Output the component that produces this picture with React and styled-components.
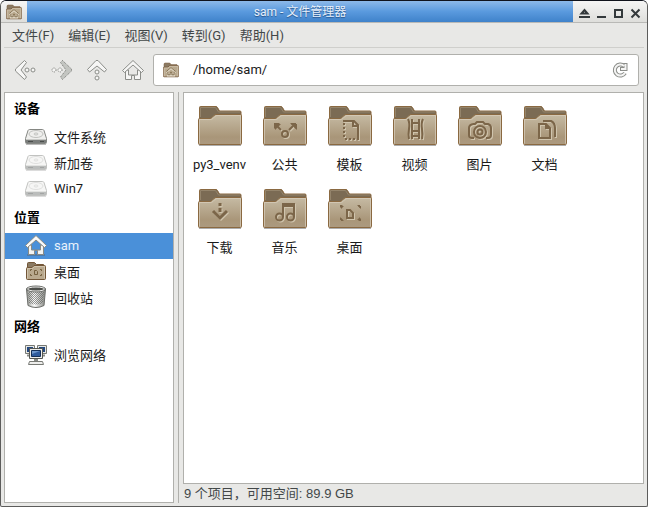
import React from 'react';
import styled, { createGlobalStyle, css } from 'styled-components';

const colors = {
  base: '#e8e8e6',
  border: '#b0b0ac',
  divider: '#cfcfcc',
  frame: '#5c5c5b',
  select: '#4a90d9',
  text: '#1a1a1a',
  chrome: '#424748',
  folderEdge: '#8a6941',
  glyph: '#7c6649',
};

const GlobalStyle = createGlobalStyle`
  * {
    box-sizing: border-box;
  }
  body {
    background: #fff;
    margin: 0;
  }
  body,
  button,
  input {
    font-family: Roboto, "Noto Sans CJK SC", sans-serif;
    font-size: 13px;
  }
`;

const Window = styled.div`
  background: ${colors.base};
  border: 1px solid ${colors.frame};
  border-top: 1px solid #10131c;
  border-radius: 6px 6px 2px 2px;
  display: flex;
  flex-direction: column;
  height: 100vh;
  min-height: 400px;
  overflow: hidden;
`;
const TitleBar = styled.header`
  border-bottom: 1px solid #b9b9b6;
  display: flex;
  height: 22px;
  flex: none;
`;
const WindowIcon = styled.div`
  align-items: center;
  background: linear-gradient(#f5f5f4, #dededb);
  display: flex;
  justify-content: center;
  width: 26px;
`;
const Title = styled.h1`
  background: linear-gradient(#8db9e9, #5a9ade 50%, #3f82ca);
  color: #e6effa;
  flex: 1;
  font-size: 12px;
  font-weight: normal;
  line-height: 22px;
  margin: 0;
  text-align: center;
  text-shadow: 0 1px 1px #28558a;
`;
const WindowButtons = styled.div`
  background: linear-gradient(#f5f5f4, #dededb);
  display: flex;
  padding: 2px 3px 0;
`;
const PlainButton = styled.button`
  align-items: center;
  background: none;
  border: 0;
  display: flex;
  justify-content: center;
  padding: 0;
`;
const WindowButton = styled(PlainButton)`
  width: 17px;
`;

const MenuBar = styled.nav`
  border-bottom: 1px solid ${colors.divider};
  display: flex;
  flex: none;
  gap: 14px;
  height: 25px;
  margin: 0 3px;
  padding: 0 8px 2px;
`;
const MenuItem = styled(PlainButton)`
  color: ${colors.chrome};
`;

const Toolbar = styled.div`
  align-items: center;
  display: flex;
  flex: none;
  height: 44px;
  padding: 0 8px 0 6px;
`;
const ToolButton = styled(PlainButton)`
  height: 36px;
  width: 36px;
`;
const PathBar = styled.div`
  align-items: center;
  background: #fff;
  border: 1px solid ${colors.border};
  border-radius: 3px;
  display: flex;
  flex: 1;
  height: 32px;
  margin-left: 2px;
  padding: 0 9px;
`;
const PathInput = styled.input`
  background: none;
  border: 0;
  color: ${colors.text};
  flex: 1;
  min-width: 0;
  outline: 0;
  padding: 0 14px 2px;
`;

const Body = styled.div`
  display: flex;
  flex: 1;
  min-height: 0;
  padding: 0 3px 3px;
`;
const Sidebar = styled.aside`
  background: #fff;
  border: 1px solid ${colors.border};
  flex: none;
  overflow: hidden;
  width: 170px;
`;
const Heading = styled.h2`
  color: #000;
  font-size: 13px;
  line-height: 31px;
  margin: 0;
  padding-left: 9px;
`;
const PlaceList = styled.ul`
  list-style: none;
  margin: 0;
  padding: 0;
`;
const Place = styled(PlainButton)`
  color: ${colors.text};
  gap: 6px;
  height: 26px;
  justify-content: flex-start;
  padding: 0 0 2px 19px;
  width: 100%;
  ${props => props.$selected && css`
    background: ${colors.select};
    color: #e9f2fb;
  `}
`;
const Handle = styled.div`
  border-left: 1px solid ${colors.border};
  flex: none;
  margin-left: 4px;
  width: 5px;
`;
const Content = styled.section`
  display: flex;
  flex: 1;
  flex-direction: column;
  min-width: 0;
`;
const IconView = styled.main`
  align-content: start;
  background: #fff;
  border: 1px solid ${colors.border};
  display: grid;
  flex: 1;
  grid-auto-rows: 83px;
  grid-template-columns: repeat(auto-fill, 65px);
  padding: 8px 60px 8px 3px;
`;
const Item = styled(PlainButton)`
  color: ${colors.text};
  flex-direction: column;
  gap: 6px;
  justify-content: flex-start;
`;
const Label = styled.span`
  line-height: 20px;
`;
const StatusBar = styled.footer`
  color: ${colors.chrome};
  font-family: "Liberation Sans", "Noto Sans CJK SC", sans-serif;
  height: 19px;
  line-height: 19px;
  padding-left: 1px;
`;

const glyphs = {
  none: null,
  share: (
    <>
      <circle cx="24" cy="33" r="3" />
      <path d="M20 29l-4-4M28 29l4-4" />
      <path d="M13 22h6l-6 6zM35 22h-6l6 6z" fill={colors.glyph} stroke="none" />
    </>
  ),
  template: (
    <>
      <path d="M17 20h11l4 4v13M27 20v5h5" />
      <path d="M18 22v15M19 38h14" strokeDasharray="2 2" />
    </>
  ),
  video: (
    <>
      <path d="M17 18q2 4 1 10t0 10M32 18q-2 4-1 10t0 10" />
      <path d="M21 18v20M28 18v20" />
      <path d="M21 22h7M21 30h7M21 35h7" />
    </>
  ),
  camera: (
    <>
      <path d="M17 23h2l2-2h6l2 2h3q3 1 3 4v7q0 3-3 3h-2M18 37h-2q-3 0-3-3v-7q0-3 4-4" />
      <circle cx="24" cy="31" r="6" />
      <circle cx="24" cy="31" r="2.5" />
    </>
  ),
  documents: (
    <>
      <path d="M18 23h7l4 4v10H18zM25 23v4h4M22 20h8q4 2 4 7v9" />
    </>
  ),
  download: (
    <>
      <path d="M17 27l7 7 7-7" strokeWidth="3" />
      <path d="M24 19v3M24 24v4" strokeWidth="3" />
    </>
  ),
  music: (
    <>
      <circle cx="18.5" cy="33" r="3.5" />
      <circle cx="29.5" cy="33" r="3.5" />
      <path d="M22 33V20h11v13M22 22h11" />
    </>
  ),
  desktop: (
    <>
      <path d="M21 26h3l3 3v5h-6z" strokeWidth="2" />
      <path d="M14 21h3l-3 3zM34 21h-3l3 3zM14 36h3l-3-3zM34 36h-3l3-3z" fill={colors.glyph} stroke="none" />
    </>
  ),
};

function FolderIcon({ glyph = 'none', size = 48 }) {
  const id = `folder-${glyph}`;
  return (
    <svg width={size} height={size} viewBox="0 0 48 48" fill="none" aria-hidden="true">
      <defs>
        <linearGradient id={id} x2="0" y2="1">
          <stop stopColor="#c6bba4" />
          <stop offset=".75" stopColor="#a99679" />
          <stop offset="1" stopColor="#ac9a80" />
        </linearGradient>
      </defs>
      <path d="M3 44.5h42" stroke="#333" strokeOpacity=".4" />
      <path d="M3.500 42V6.500q0-1 1-1H20q1 0 1.500 1l2 3.500H44q1 0 1 1v31z" fill="#7b6b54" stroke={colors.folderEdge} />
      <path d="M4.500 16V6.500h15l3 4.500H44" stroke="#94846b" />
      <path d="M2.500 18.500q0-1 1-1H14q1 0 2-1l2-2q1-1 2-1h24.500q1 0 1 1v28q0 1-1 1h-41q-1 0-1-1z" fill={`url(#${id})`} stroke={colors.folderEdge} />
      <path d="M3.500 42.500v-24H14q2 0 3-1l2-2q1-1 2-1h23.500v28" stroke="#d8cfbd" strokeOpacity=".7" />
      <g transform="translate(1 1)" stroke="#d0c5ae" strokeWidth="2">{glyphs[glyph]}</g>
      <g stroke={colors.glyph} strokeWidth="2">{glyphs[glyph]}</g>
    </svg>
  );
}

// inset leaves the 20px drawing at its own size inside a larger icon slot
function SmallFolderIcon({ glyph, size, inset = 0 }) {
  const box = 20 + inset * 2;
  return (
    <svg width={size} height={size} viewBox={`${-inset} ${-inset} ${box} ${box}`} fill="none" aria-hidden="true">
      <path d="M1.500 16V2.500q0-1 1-1h6l2 2h7V16z" fill="#8a7a63" stroke="#735637" />
      <path d="M.5 7.500q0-1 1-1H6l2-2h10.500q1 0 1 1v12q0 1-1 1h-17q-1 0-1-1z" fill="#b9a98e" stroke="#735637" />
      <path d="M1.500 17.500v-10h5l2-2h10v12" stroke="#d0c4ae" />
      {glyph === 'home' ? (
        <>
          <path d="M4 13l6-5 6 5M6 13v4h3v-3h2v3h3v-4" stroke="#e3dac8" strokeWidth="2" />
          <path d="M4 12l6-5 6 5M6 12v4h3v-3h2v3h3v-4" stroke="#75603f" />
        </>
      ) : (
        <>
          <path d="M8.500 9.500h2l1 1v3h-3z" stroke="#75603f" />
          <path d="M4.500 10V8.500H6M14 8.500h1.500V10M4.500 13v1.500H6M14 14.500h1.500V13" stroke="#75603f" />
        </>
      )}
    </svg>
  );
}

function DriveIcon({ faded }) {
  return (
    <svg width="24" height="24" viewBox="0 0 24 24" fill="none" opacity={faded ? 0.5 : 1} aria-hidden="true">
      <path d="M2 20.500h20" stroke="#777" strokeOpacity=".5" />
      <path d="M5.500 5.500h13q1 0 1.500 1l2.500 8v4q0 1-1 1h-19q-1 0-1-1v-4l2.500-8q.5-1 1.500-1z" fill="#efefed" stroke="#858783" />
      <path d="M2 15h20v4H2z" fill="#7a7d7b" />
      <path d="M2 15.500h20" stroke="#c9cac7" />
      <ellipse cx="12" cy="10" rx="7" ry="3.500" stroke="#c0c1be" />
      <ellipse cx="12" cy="10" rx="2" ry="1" stroke="#c0c1be" />
      <path d="M4 17.500h5M16 17.500h4" stroke="#4a4d4b" />
    </svg>
  );
}

function HomeIcon() {
  return (
    <svg width="24" height="24" viewBox="0 0 24 24" fill="none" strokeLinejoin="round" aria-hidden="true">
      <path d="M3 22h18" stroke="#555" strokeOpacity=".35" strokeWidth="2" />
      <path d="M4.500 12v9.500h6v-4h3v4h6V12h-3v5h-9v-5z" fill="#f4f4f2" stroke="#888a85" />
      <path d="M12 2.500L1.500 12.500l2 2L12 7l8.500 7.500 2-2z" fill="#fafaf9" stroke="#888a85" />
    </svg>
  );
}

function TrashIcon() {
  return (
    <svg width="24" height="24" viewBox="0 0 24 24" fill="none" aria-hidden="true">
      <defs>
        <pattern id="mesh" width="2" height="2" patternUnits="userSpaceOnUse">
          <path d="M0 0h1v1H0zM1 1h1v1H1z" fill="#555753" fillOpacity=".6" />
        </pattern>
        <linearGradient id="can">
          <stop stopColor="#8f918c" />
          <stop offset=".4" stopColor="#fff" />
          <stop offset="1" stopColor="#858782" />
        </linearGradient>
      </defs>
      <path d="M2.500 4L4 20.500q8 4 16 0L21.500 4z" fill="url(#can)" stroke="#6b6d69" />
      <path d="M4 7l1 11q7 3 14 0l1-11z" fill="url(#mesh)" />
      <ellipse cx="12" cy="4" rx="9.500" ry="3" fill="#4d4f4b" stroke="#6b6d69" />
      <ellipse cx="12" cy="4" rx="8.500" ry="2" stroke="#eeeeec" />
    </svg>
  );
}

function NetworkIcon() {
  return (
    <svg width="24" height="24" viewBox="0 0 24 24" fill="none" aria-hidden="true">
      <path d="M1.500 3.500h9v8h-9zM13.500 3.500h9v8h-9z" fill="#e6e7e4" stroke="#777974" />
      <path d="M3 5h6v5H3zM15 5h6v5h-6z" fill="#23477e" />
      <path d="M3 13.500h4M17 13.500h4" stroke="#888a85" strokeWidth="2" />
      <path d="M5.500 6.500h13v10h-13z" fill="#eeeeec" stroke="#555753" />
      <path d="M7.500 8.500h9v6h-9z" fill="#2f5b9d" stroke="#142f57" />
      <path d="M8 12l8-3H8z" fill="#6f98cd" />
      <path d="M12 17v2" stroke="#888a85" strokeWidth="4" />
      <path d="M5.500 19.500h13l1 3h-15z" fill="#eeeeec" stroke="#777974" />
    </svg>
  );
}

function ToolIcon({ name }) {
  return (
    <svg width="24" height="24" viewBox="0 0 24 24" fill="#f6f6f5" stroke="#8b8d89" strokeLinejoin="round" aria-hidden="true">
      {name === 'back' && (
        <>
          <path d="M11.500 2.500l2 2L8 12l5.500 7-2 2.500L2.500 13v-2z" />
          <circle cx="14" cy="12" r="2" />
          <circle cx="20" cy="12" r="2" />
        </>
      )}
      {name === 'forward' && (
        <>
          <path d="M13.500 2.500l-2 2L17 12l-5.500 7 2 2.500 9-8.500v-2z" fill="#c3c5c1" stroke="#747672" strokeDasharray="1 1" />
          <circle cx="11" cy="12" r="2" stroke="#747672" strokeDasharray="1 1" />
          <circle cx="5" cy="12" r="2" stroke="#747672" strokeDasharray="1 1" />
        </>
      )}
      {name === 'up' && (
        <>
          <path d="M2.500 11.500l2 2.500L12 8l7.500 6 2-2.500L13 2.500h-2z" />
          <circle cx="12" cy="14" r="2" />
          <circle cx="12" cy="20" r="2" />
        </>
      )}
      {name === 'home' && (
        <>
          <path d="M4.500 12v9.500h6v-4h3v4h6V12h-3v5h-9v-5z" />
          <path d="M12 2.500L1.500 12.500l2 2L12 7l8.500 7.500 2-2z" />
        </>
      )}
    </svg>
  );
}

function ReloadIcon() {
  return (
    <svg width="18" height="18" viewBox="0 0 18 18" fill="none" aria-hidden="true">
      <path d="M13 5A5.500 5.500 0 1 0 14 12M14.500 2v6H9" stroke="#8b8d89" strokeWidth="4" />
      <path d="M13 5A5.500 5.500 0 1 0 14 12M14.500 3v5H10" stroke="#f4f4f3" strokeWidth="2" />
    </svg>
  );
}

const windowIcons = {
  卷起: <path d="M1 11h11M3.500 7.500h6l-3-3.500z" />,
  最小化: <path d="M2 11h9" />,
  最大化: <path d="M3 4h7v7H3z" />,
  关闭: <path d="M2.500 3.500l8 8M10.500 3.500l-8 8" />,
};

const places = [
  {
    title: '设备',
    items: [
      { name: '文件系统', icon: <DriveIcon /> },
      { name: '新加卷', icon: <DriveIcon faded /> },
      { name: 'Win7', icon: <DriveIcon faded /> },
    ],
  },
  {
    title: '位置',
    items: [
      { name: 'sam', icon: <HomeIcon />, selected: true },
      { name: '桌面', icon: <SmallFolderIcon glyph="desktop" size={24} inset={2} /> },
      { name: '回收站', icon: <TrashIcon /> },
    ],
  },
  {
    title: '网络',
    items: [{ name: '浏览网络', icon: <NetworkIcon /> }],
  },
];

const files = [
  ['py3_venv', 'none'],
  ['公共', 'share'],
  ['模板', 'template'],
  ['视频', 'video'],
  ['图片', 'camera'],
  ['文档', 'documents'],
  ['下载', 'download'],
  ['音乐', 'music'],
  ['桌面', 'desktop'],
];

export default function App() {
  return (
    <Window>
      <GlobalStyle />
      <TitleBar>
        <WindowIcon>
          <SmallFolderIcon glyph="home" size={16} />
        </WindowIcon>
        <Title>sam - 文件管理器</Title>
        <WindowButtons>
          {Object.entries(windowIcons).map(([label, icon]) => (
            <WindowButton key={label} aria-label={label}>
              <svg width="13" height="14" viewBox="0 0 13 14" fill="none" stroke="#33393b" strokeWidth="2">
                {icon}
              </svg>
            </WindowButton>
          ))}
        </WindowButtons>
      </TitleBar>
      <MenuBar>
        {['文件(F)', '编辑(E)', '视图(V)', '转到(G)', '帮助(H)'].map(label => (
          <MenuItem key={label}>{label}</MenuItem>
        ))}
      </MenuBar>
      <Toolbar>
        <ToolButton aria-label="后退"><ToolIcon name="back" /></ToolButton>
        <ToolButton aria-label="前进"><ToolIcon name="forward" /></ToolButton>
        <ToolButton aria-label="上级"><ToolIcon name="up" /></ToolButton>
        <ToolButton aria-label="主目录"><ToolIcon name="home" /></ToolButton>
        <PathBar>
          <SmallFolderIcon glyph="home" size={16} />
          <PathInput aria-label="路径" defaultValue="/home/sam/" />
          <PlainButton aria-label="刷新"><ReloadIcon /></PlainButton>
        </PathBar>
      </Toolbar>
      <Body>
        <Sidebar>
          {places.map(group => (
            <React.Fragment key={group.title}>
              <Heading>{group.title}</Heading>
              <PlaceList>
                {group.items.map(item => (
                  <li key={item.name}>
                    <Place $selected={item.selected}>
                      {item.icon}
                      {item.name}
                    </Place>
                  </li>
                ))}
              </PlaceList>
            </React.Fragment>
          ))}
        </Sidebar>
        <Handle />
        <Content>
          <IconView>
            {files.map(([name, glyph]) => (
              <Item key={name}>
                <FolderIcon glyph={glyph} />
                <Label>{name}</Label>
              </Item>
            ))}
          </IconView>
          <StatusBar>9 个项目，可用空间: 89.9 GB</StatusBar>
        </Content>
      </Body>
    </Window>
  );
}
